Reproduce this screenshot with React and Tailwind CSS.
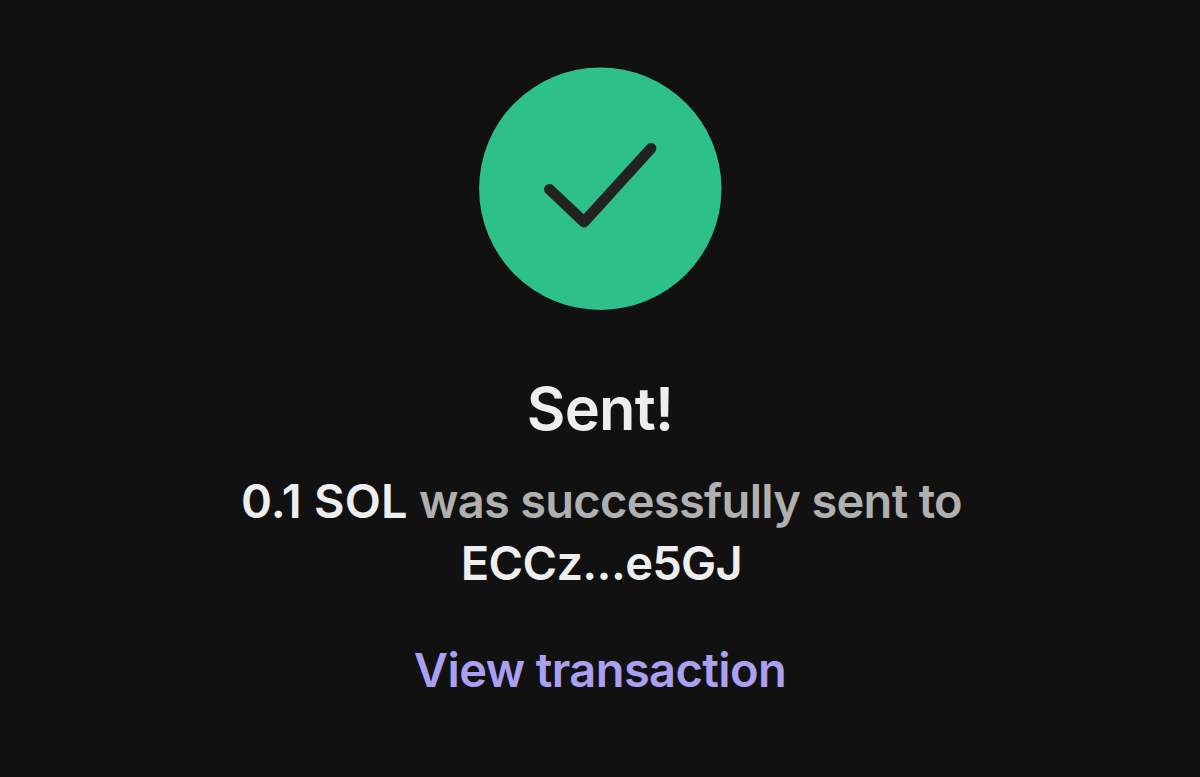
const TransactionSent = () => {
  return (
    <div className="h-screen bg-[#111111] flex flex-col items-center overflow-hidden pt-[67px] font-['Inter',sans-serif] font-semibold text-[#eeeeee] text-center whitespace-nowrap">
      {/* Success icon */}
      <svg className="size-[243px] shrink-0" viewBox="0 0 243 243" fill="none">
        <circle cx="121.3" cy="121.7" r="121.2" fill="#2ec08b" />
        <path d="M70.5 122.3L105 155L172 81.3" stroke="#222222" strokeWidth="10.8" strokeLinecap="round" strokeLinejoin="round" />
      </svg>

      {/* Message */}
      <h1 className="mt-[62px] text-[59.5px] leading-[72px] tracking-[-0.8px]">Sent!</h1>
      <p className="mt-[26px] pl-[3px] text-[47px] leading-[62px] tracking-[-0.7px] text-[#b0b0b0]">
        <span className="text-[#eeeeee] tracking-[0.2px]">0.1 SOL</span> was successfully sent to
        <br />
        <span className="text-[#eeeeee]">ECCz...e5GJ</span>
      </p>

      <a href="#" className="mt-[45px] text-[47px] leading-[62px] tracking-[-0.6px] text-[#ab9ff2]">
        View transaction
      </a>
    </div>
  );
};

export default TransactionSent;
